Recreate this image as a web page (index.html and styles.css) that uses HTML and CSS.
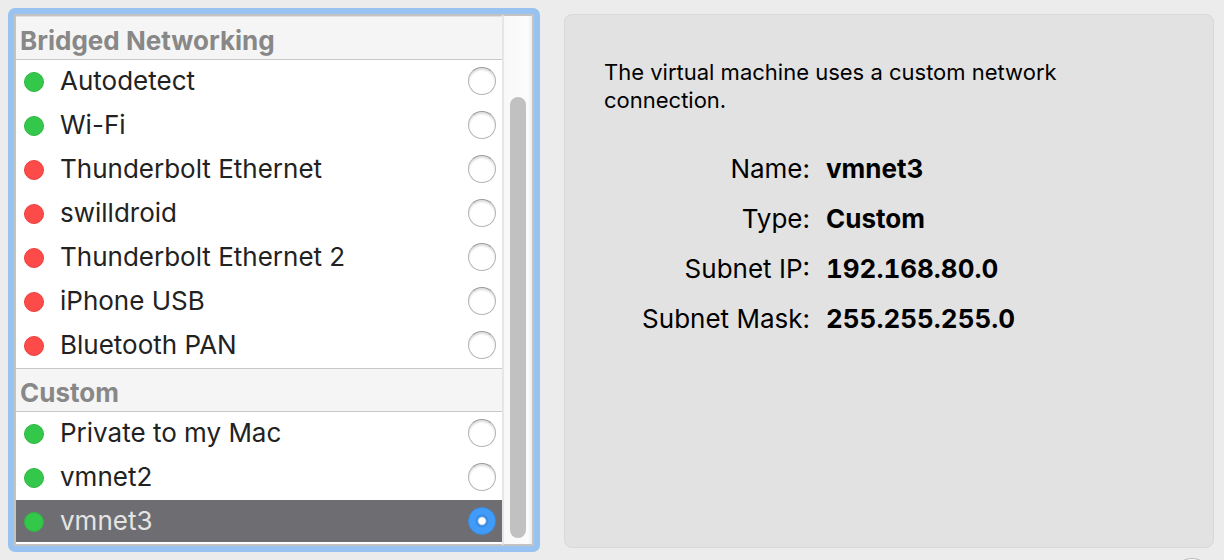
FILE: index.html
```html
<!DOCTYPE html>
<html lang="en">
<head>
<meta charset="utf-8">
<title>Network Adapter</title>
<link rel="stylesheet" href="styles.css">
</head>
<body>
<main class="layout">
  <form class="picker">
    <div class="list">
      <fieldset class="group">
        <legend class="group-title">Bridged Networking</legend>
        <label class="row"><span class="dot up"></span><span class="name">Autodetect</span><input class="radio" type="radio" name="network"></label>
        <label class="row"><span class="dot up"></span><span class="name">Wi-Fi</span><input class="radio" type="radio" name="network"></label>
        <label class="row"><span class="dot down"></span><span class="name">Thunderbolt Ethernet</span><input class="radio" type="radio" name="network"></label>
        <label class="row"><span class="dot down"></span><span class="name">swilldroid</span><input class="radio" type="radio" name="network"></label>
        <label class="row"><span class="dot down"></span><span class="name">Thunderbolt Ethernet 2</span><input class="radio" type="radio" name="network"></label>
        <label class="row"><span class="dot down"></span><span class="name">iPhone USB</span><input class="radio" type="radio" name="network"></label>
        <label class="row"><span class="dot down"></span><span class="name">Bluetooth PAN</span><input class="radio" type="radio" name="network"></label>
      </fieldset>
      <fieldset class="group">
        <legend class="group-title">Custom</legend>
        <label class="row"><span class="dot up"></span><span class="name">Private to my Mac</span><input class="radio" type="radio" name="network"></label>
        <label class="row"><span class="dot up"></span><span class="name">vmnet2</span><input class="radio" type="radio" name="network"></label>
        <label class="row selected"><span class="dot up"></span><span class="name">vmnet3</span><input class="radio" type="radio" name="network" checked></label>
      </fieldset>
    </div>
    <div class="scrollbar"><div class="thumb"></div></div>
  </form>
  <div class="side">
    <section class="details">
      <p class="description">The virtual machine uses a custom network connection.</p>
      <dl class="facts">
        <dt>Name:</dt><dd>vmnet3</dd>
        <dt>Type:</dt><dd>Custom</dd>
        <dt>Subnet IP:</dt><dd class="address">192.168.80.0</dd>
        <dt>Subnet Mask:</dt><dd class="address">255.255.255.0</dd>
      </dl>
    </section>
    <footer class="footer"><button class="help" type="button" aria-label="Help"></button></footer>
  </div>
</main>
</body>
</html>
```
FILE: styles.css
```css
* {
  box-sizing: border-box;
}

body {
  margin: 0;
  background: #ececec;
  color: #000;
  font-family: Inter, "Liberation Sans", sans-serif;
  font-size: 26px;
}

.layout {
  display: flex;
  gap: 24px;
  height: 100vh;
  padding: 8px 10px 0 8px;
  overflow: hidden;
}

.picker {
  display: flex;
  flex: 0 0 532px;
  align-self: flex-start;
  border: 6px solid #98c3f1;
  border-radius: 7px;
  background: #fff;
}

.list {
  flex: 1;
  border: 2px solid #c3c3c3;
  border-right: 0;
}

.group {
  min-width: 0;
  margin: 0;
  padding: 0;
  border: 0;
}

.group-title {
  width: 100%;
  height: 44px;
  padding: 0 4px;
  border-top: 1px solid #c8c8c8;
  border-bottom: 1px solid #c8c8c8;
  background: #f5f5f5;
  color: #888;
  font-weight: 700;
  line-height: 48px;
}

.group:first-child .group-title {
  border-top-color: #e0e0e0;
}

.row {
  display: flex;
  align-items: center;
  height: 42px;
  margin-bottom: 2px;
  padding: 0 6px 0 8px;
  color: #222;
}

.row.selected {
  background: #6e6d72;
  color: #e4e4e4;
}

.dot {
  width: 20px;
  height: 20px;
  margin: 2px 16px 0 0;
  border-radius: 50%;
}

.up {
  border: 1px solid #2eb644;
  background: #34c84a;
}

.down {
  border: 1px solid #e8423f;
  background: #fc4b48;
}

.name {
  flex: 1;
  padding-bottom: 2px;
}

.radio {
  appearance: none;
  width: 28px;
  height: 28px;
  margin: 0;
  border: 1px solid #b4b4b4;
  border-top-color: #999;
  border-radius: 50%;
  background: #fff;
  box-shadow: inset 0 2px 2px #ddd;
}

.radio:checked {
  border-color: #368ee9;
  background: radial-gradient(circle, #fff 3px, #2f82dc 5px, #419bf9 7px);
  box-shadow: none;
}

.scrollbar {
  flex: 0 0 32px;
  padding: 81px 6px 6px;
  border: 2px solid #c3c3c3;
  border-left-color: #e6e6e6;
  background: linear-gradient(to right, #f8f8f8, #fcfcfc 85%, #eee);
}

.thumb {
  height: 100%;
  border-radius: 8px;
  background: #c1c1c1;
}

.side {
  display: flex;
  flex: 1;
  flex-direction: column;
  min-width: 0;
  padding-top: 6px;
}

.details {
  flex: 1;
  padding: 43px 39px;
  border: 1px solid #d8d8d8;
  border-radius: 8px;
  background: #e2e2e2;
}

.description {
  max-width: 480px;
  margin: 0 0 30px;
  font-size: 22px;
  line-height: 28px;
}

.facts {
  display: grid;
  grid-template-columns: 206px 1fr;
  column-gap: 16px;
  margin: 0;
  line-height: 50px;
}

.facts dt {
  text-align: right;
}

.facts dd {
  margin: 0;
  font-weight: 700;
}

.facts .address {
  font-variant-numeric: tabular-nums;
}

.footer {
  display: flex;
  justify-content: flex-end;
  height: 12px;
  padding: 10px 1px 0;
}

.help {
  flex: none;
  width: 42px;
  height: 42px;
  border: 1px solid #bbb;
  border-radius: 50%;
  background: #fff;
}
```
